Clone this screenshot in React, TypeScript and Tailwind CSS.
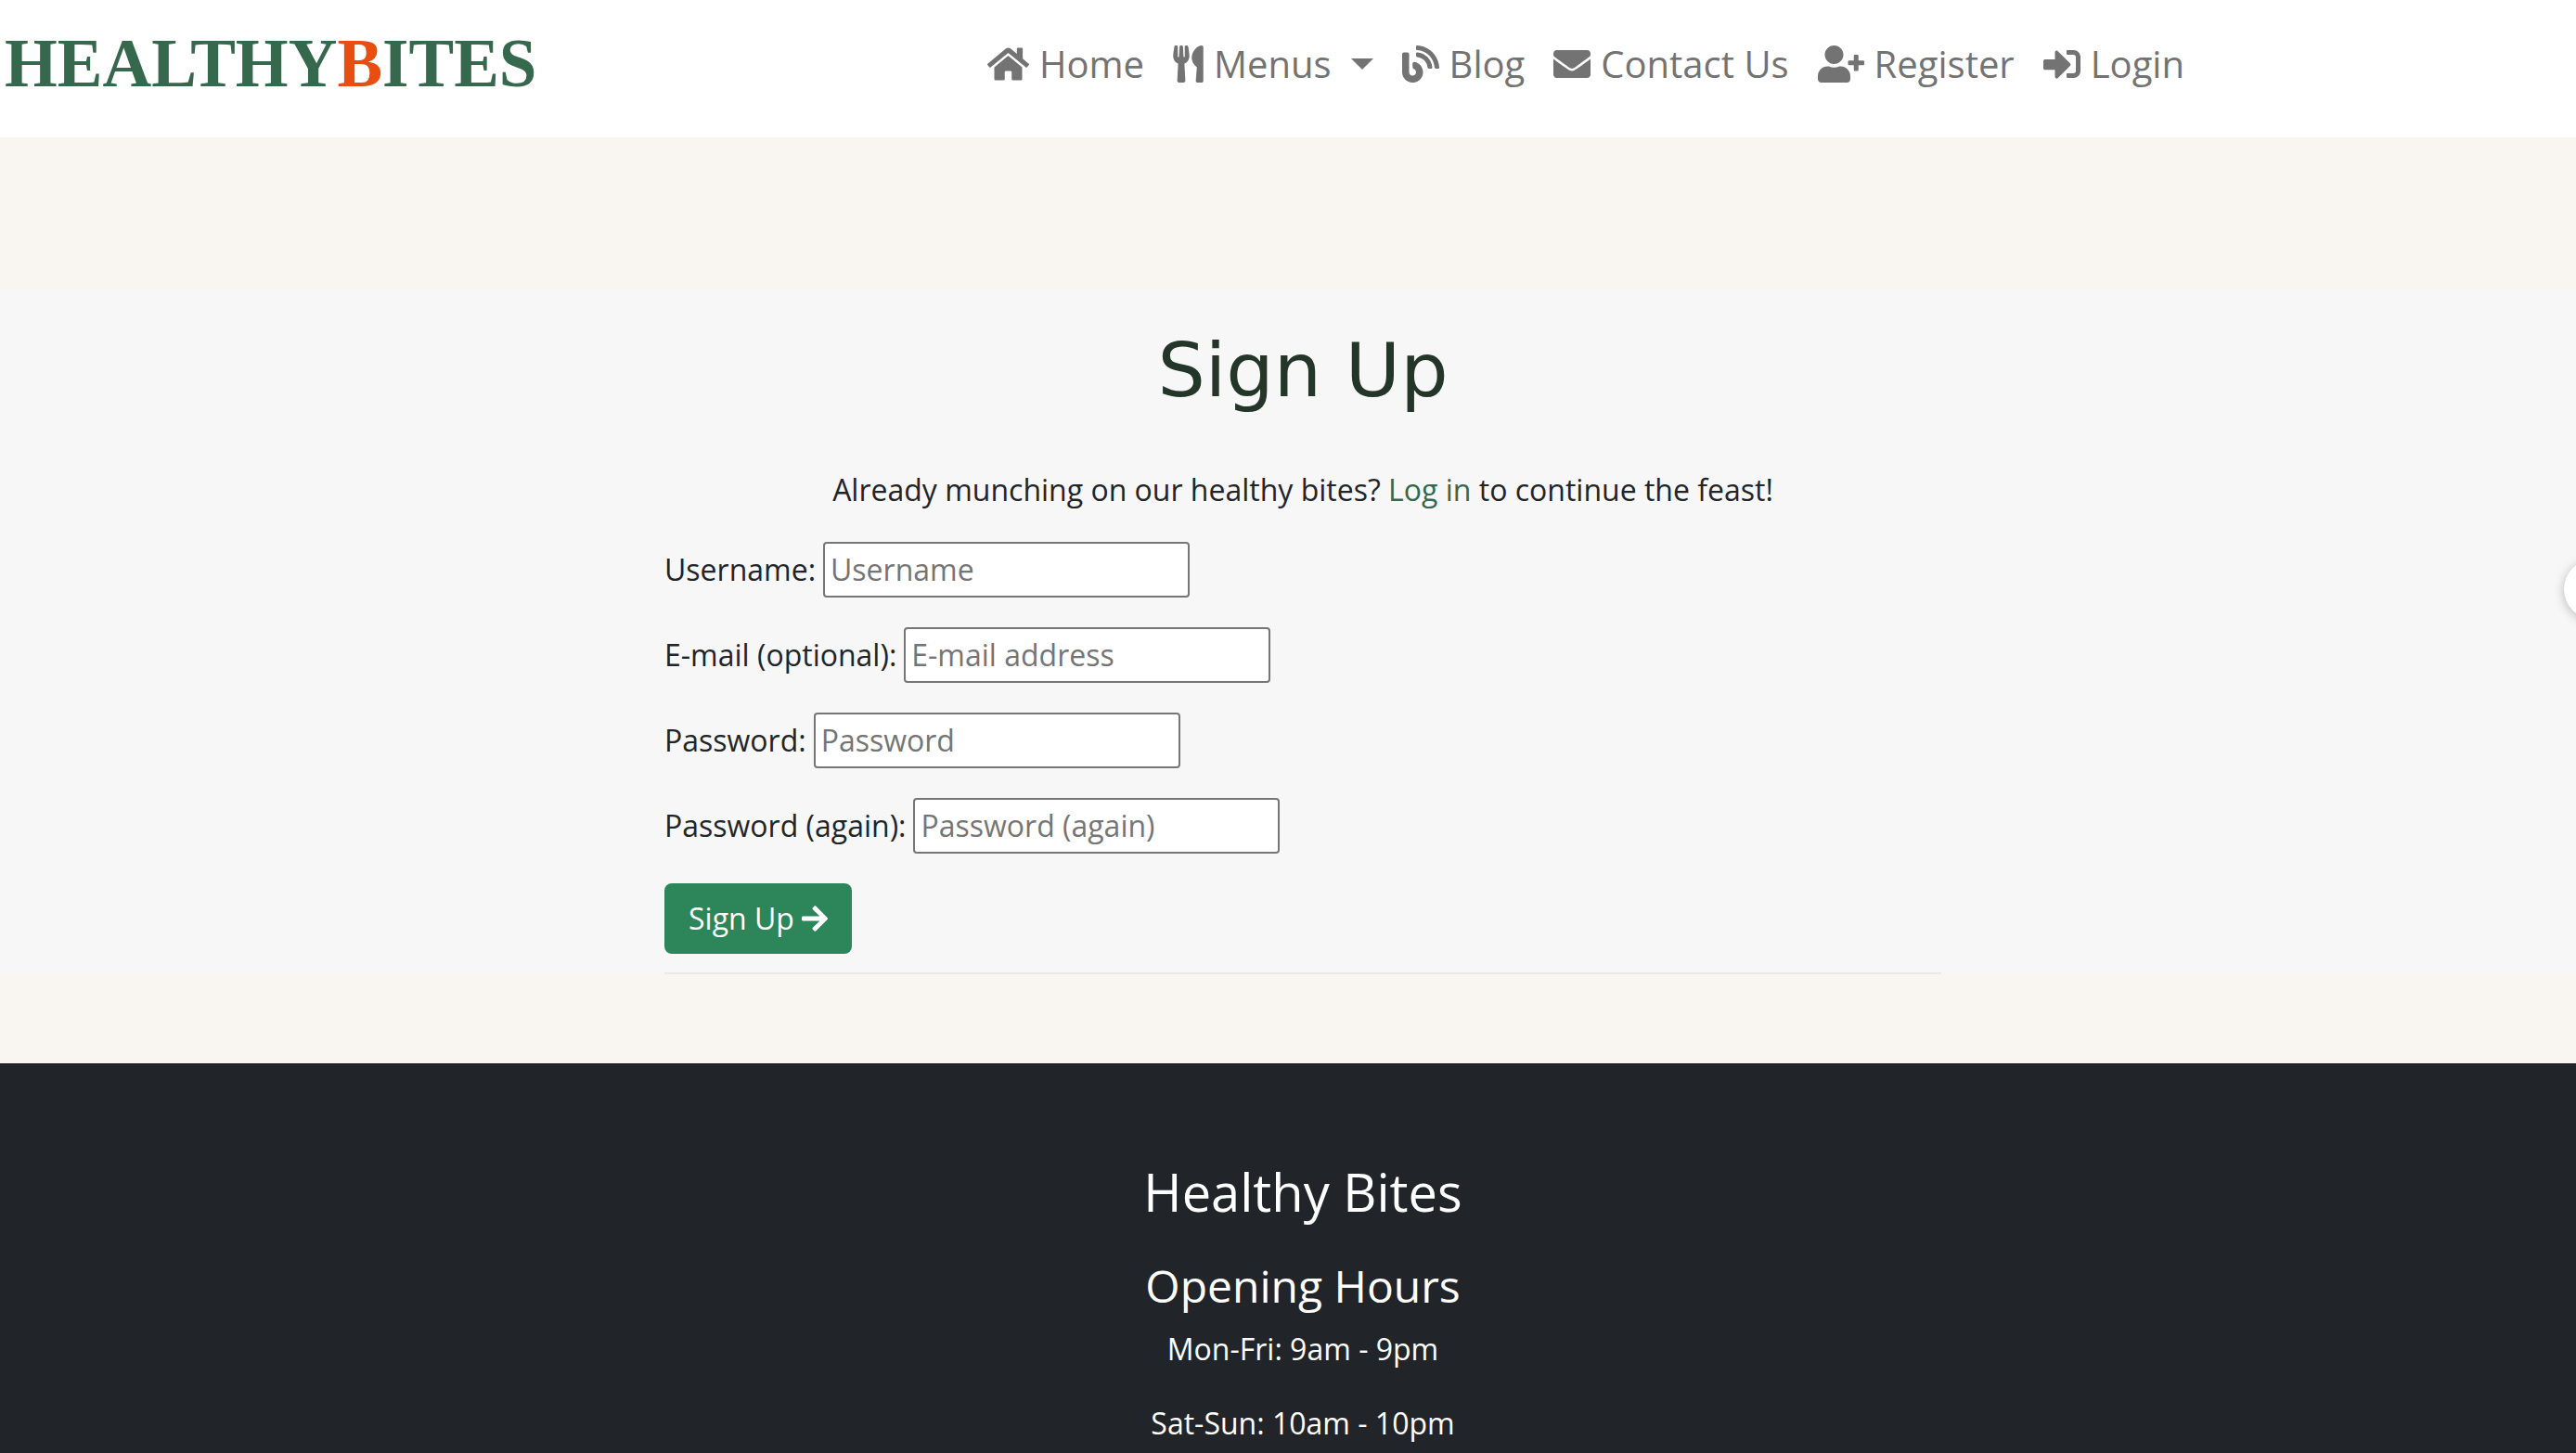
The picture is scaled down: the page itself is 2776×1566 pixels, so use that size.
import React from "react";
import {
  FaHome,
  FaUtensils,
  FaBlog,
  FaEnvelope,
  FaUserPlus,
  FaSignInAlt,
  FaArrowRight,
} from "react-icons/fa";

const link = "flex items-center gap-[11px] hover:text-gray-700";

function Nav() {
  return (
    <header className="flex h-[148px] items-start bg-white">
      <a
        href="#home"
        className="pt-[25px] pl-[5px] font-['Liberation_Serif',serif] text-[73px] leading-[88px] font-bold text-[#35684c]"
      >
        HEALTHY<span className="text-[#e84e10]">B</span>ITES
      </a>
      <nav className="ml-auto flex gap-[31px] pt-[39px] pr-[422px] text-[40px] leading-[60px] text-[#737373]">
        <a href="#home" className={link}>
          <FaHome className="h-10 w-[45px]" />
          Home
        </a>
        <button type="button" className={link}>
          <FaUtensils className="h-10 w-[33px]" />
          Menus
          <span className="ml-[10px] border-x-[12px] border-t-[12px] border-x-transparent border-t-current" />
        </button>
        <a href="#blog" className={link}>
          <FaBlog className="size-10" />
          Blog
        </a>
        <a href="#contact" className={link}>
          <FaEnvelope className="size-10" />
          Contact Us
        </a>
        <a href="#register" className={link}>
          <FaUserPlus className="h-10 w-[50px]" />
          Register
        </a>
        <a href="#login" className={link}>
          <FaSignInAlt className="size-10" />
          Login
        </a>
      </nav>
    </header>
  );
}

const fields = [
  { id: "username", label: "Username:", placeholder: "Username", type: "text" },
  { id: "email", label: "E-mail (optional):", placeholder: "E-mail address", type: "email" },
  { id: "password1", label: "Password:", placeholder: "Password", type: "password" },
  { id: "password2", label: "Password (again):", placeholder: "Password (again)", type: "password" },
];

export default function App() {
  return (
    <div className="relative h-screen overflow-hidden bg-[#f9f5f0] font-['Open_Sans',sans-serif] text-[32px] leading-[48px] text-[#212529]">
      <Nav />
      <main className="mt-[164px] mb-[96px] bg-[#f7f7f7] pl-8">
        <div className="mx-auto w-full max-w-[1376px] border-b-2 border-[#e8e8e8] pt-10 pb-5">
          <h1 className="text-center font-['DejaVu_Sans',sans-serif] text-[81px] leading-[94px] text-[#243529]">
            Sign Up
          </h1>
          <p className="mt-[58px] text-center">
            Already munching on our healthy bites?{" "}
            <a href="#login" className="text-[#35684c]">
              Log in
            </a>{" "}
            to continue the feast!
          </p>
          <form className="mt-8 flex flex-col items-start gap-8">
            {fields.map((f) => (
              <div key={f.id} className="flex items-center gap-2">
                <label htmlFor={f.id}>{f.label}</label>
                <input
                  id={f.id}
                  type={f.type}
                  placeholder={f.placeholder}
                  className="h-[60px] w-[395px] rounded-[4px] border-2 border-[#767676] bg-white px-1.5 pb-0.5 placeholder:text-[#757575]"
                />
              </div>
            ))}
            <button
              type="submit"
              className="flex h-[76px] items-center gap-2 rounded-lg bg-[#2d8659] px-[26px] text-white"
            >
              Sign Up
              <FaArrowRight className="h-8 w-7" />
            </button>
          </form>
        </div>
      </main>
      <footer className="h-[600px] bg-[#212529] pt-[102px] pl-8 text-center text-white">
        <h2 className="text-[56px] leading-[72px]">Healthy Bites</h2>
        <h3 className="mt-[34px] text-[48px] leading-[64px]">Opening Hours</h3>
        <p className="mt-3">Mon-Fri: 9am - 9pm</p>
        <p className="mt-8">Sat-Sun: 10am - 10pm</p>
      </footer>
      <div className="absolute top-[603px] -right-[51px] size-16 rounded-full bg-white shadow-[0_2px_12px_rgba(0,0,0,0.25)]" />
    </div>
  );
}
